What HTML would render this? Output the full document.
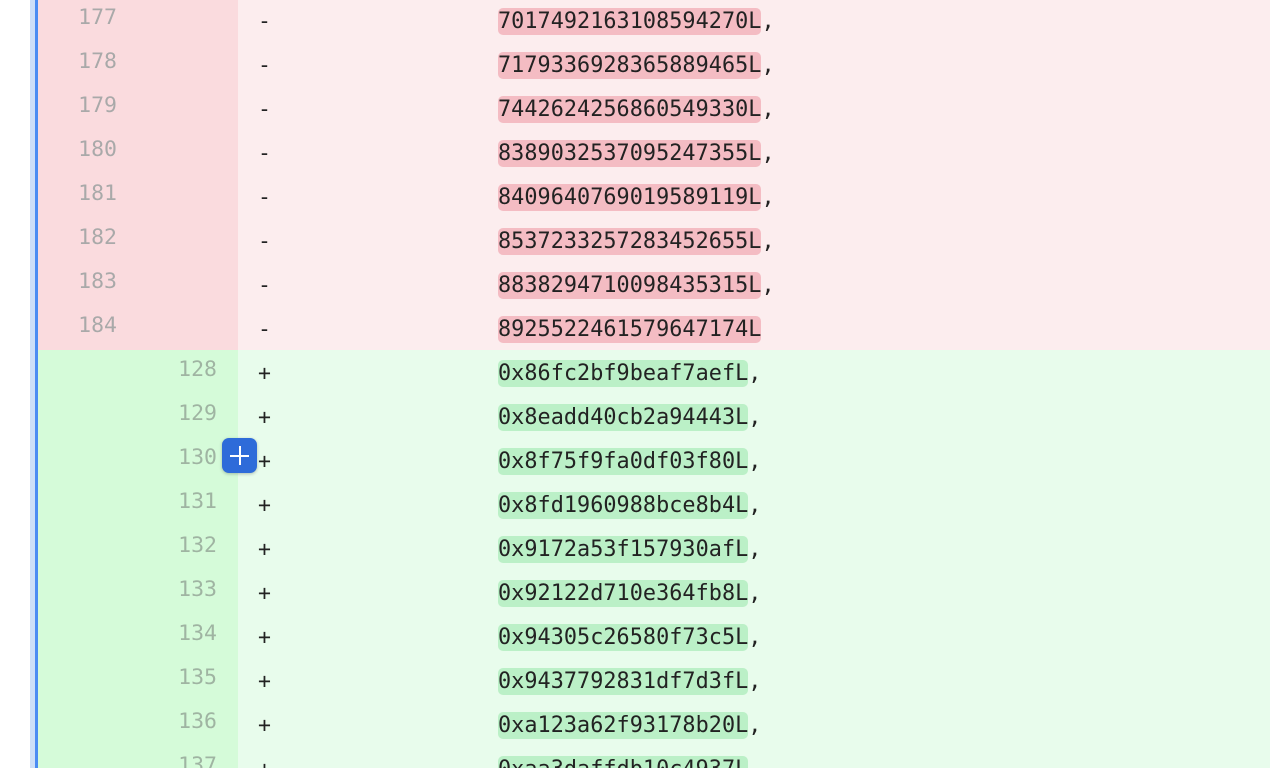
<!DOCTYPE html>
<html style="overflow:hidden;width:1270px;height:768px"><head><style>
body{margin:0;width:1270px;height:768px;overflow:hidden;background:#fff;position:relative;font-family:"DejaVu Sans Mono","Liberation Mono",monospace;}
.strip1{position:absolute;left:30px;top:0;width:5px;height:768px;background:#cddff8}
.strip2{position:absolute;left:35px;top:0;width:3px;height:768px;background:#4b8cf2}
.row{position:absolute;left:38px;width:1232px;height:44px;overflow:hidden}
.g{position:absolute;left:0;top:0;width:200px;height:44px}
.c{position:absolute;left:200px;top:0;right:0;height:44px}
.d .g{background:#fadbde}.d .c{background:#fcedee}
.a .g{background:#d5fbd9}.a .c{background:#e8fcec}
.n{position:absolute;top:9px;font-size:21.5px;line-height:22px;color:#a9a9a9;text-align:right;width:60px}
.a .n{color:#9fb4a2}
.m{position:absolute;left:220px;top:2px;line-height:44px;font-size:21.5px;color:#222}
.t{position:absolute;left:460px;top:2px;line-height:44px;font-size:21.8px;color:#222;letter-spacing:0.05px}
.t span{border-radius:5px;padding:1px 0}
.d .t span{background:#f4bcc3}.a .t span{background:#bbf0c7}
.btn{position:absolute;left:222px;top:438px;width:35px;height:35px;border-radius:7px;background:#2e6bd9;box-shadow:0 1px 3px rgba(0,0,0,.25)}
.btn:before{content:"";position:absolute;left:8px;top:16.5px;width:19px;height:2px;background:#fff}
.btn:after{content:"";position:absolute;left:16.5px;top:8px;width:2px;height:19px;background:#fff}
</style></head><body>
<div class="strip1"></div><div class="strip2"></div>

<div class="row d" style="top:-2px"><div class="g"><div class="n" style="left:19px">177</div></div><div class="c"></div><div class="m">-</div><div class="t"><span>7017492163108594270L</span>,</div></div>
<div class="row d" style="top:42px"><div class="g"><div class="n" style="left:19px">178</div></div><div class="c"></div><div class="m">-</div><div class="t"><span>7179336928365889465L</span>,</div></div>
<div class="row d" style="top:86px"><div class="g"><div class="n" style="left:19px">179</div></div><div class="c"></div><div class="m">-</div><div class="t"><span>7442624256860549330L</span>,</div></div>
<div class="row d" style="top:130px"><div class="g"><div class="n" style="left:19px">180</div></div><div class="c"></div><div class="m">-</div><div class="t"><span>8389032537095247355L</span>,</div></div>
<div class="row d" style="top:174px"><div class="g"><div class="n" style="left:19px">181</div></div><div class="c"></div><div class="m">-</div><div class="t"><span>8409640769019589119L</span>,</div></div>
<div class="row d" style="top:218px"><div class="g"><div class="n" style="left:19px">182</div></div><div class="c"></div><div class="m">-</div><div class="t"><span>8537233257283452655L</span>,</div></div>
<div class="row d" style="top:262px"><div class="g"><div class="n" style="left:19px">183</div></div><div class="c"></div><div class="m">-</div><div class="t"><span>8838294710098435315L</span>,</div></div>
<div class="row d" style="top:306px"><div class="g"><div class="n" style="left:19px">184</div></div><div class="c"></div><div class="m">-</div><div class="t"><span>8925522461579647174L</span></div></div>

<div class="row a" style="top:350px"><div class="g"><div class="n" style="left:119px">128</div></div><div class="c"></div><div class="m">+</div><div class="t"><span>0x86fc2bf9beaf7aefL</span>,</div></div>
<div class="row a" style="top:394px"><div class="g"><div class="n" style="left:119px">129</div></div><div class="c"></div><div class="m">+</div><div class="t"><span>0x8eadd40cb2a94443L</span>,</div></div>
<div class="row a" style="top:438px"><div class="g"><div class="n" style="left:119px">130</div></div><div class="c"></div><div class="m">+</div><div class="t"><span>0x8f75f9fa0df03f80L</span>,</div></div>
<div class="row a" style="top:482px"><div class="g"><div class="n" style="left:119px">131</div></div><div class="c"></div><div class="m">+</div><div class="t"><span>0x8fd1960988bce8b4L</span>,</div></div>
<div class="row a" style="top:526px"><div class="g"><div class="n" style="left:119px">132</div></div><div class="c"></div><div class="m">+</div><div class="t"><span>0x9172a53f157930afL</span>,</div></div>
<div class="row a" style="top:570px"><div class="g"><div class="n" style="left:119px">133</div></div><div class="c"></div><div class="m">+</div><div class="t"><span>0x92122d710e364fb8L</span>,</div></div>
<div class="row a" style="top:614px"><div class="g"><div class="n" style="left:119px">134</div></div><div class="c"></div><div class="m">+</div><div class="t"><span>0x94305c26580f73c5L</span>,</div></div>
<div class="row a" style="top:658px"><div class="g"><div class="n" style="left:119px">135</div></div><div class="c"></div><div class="m">+</div><div class="t"><span>0x9437792831df7d3fL</span>,</div></div>
<div class="row a" style="top:702px"><div class="g"><div class="n" style="left:119px">136</div></div><div class="c"></div><div class="m">+</div><div class="t"><span>0xa123a62f93178b20L</span>,</div></div>
<div class="row a" style="top:746px;height:22px"><div class="g"><div class="n" style="left:119px">137</div></div><div class="c"></div><div class="m">+</div><div class="t"><span>0xaa3daffdb10c4937L</span>,</div></div>

<div class="btn"></div>
</body></html>
